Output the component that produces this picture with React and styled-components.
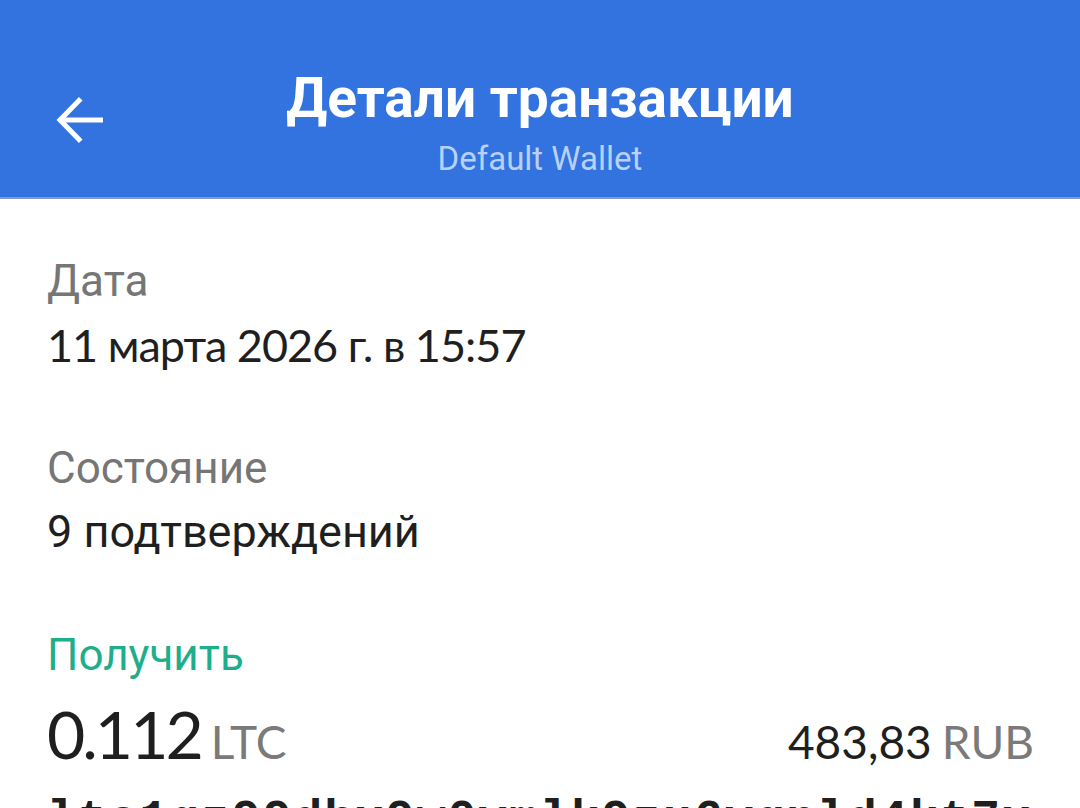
import React from "react";
import styled, { createGlobalStyle } from "styled-components";

const GlobalStyle = createGlobalStyle`
  html, body {
    margin: 0;
    padding: 0;
    background: #ffffff;
    overflow: hidden;
  }
`;

function BackIcon() {
  return (
    <svg width="48" height="48" viewBox="0 0 48 48" fill="none">
      <path
        d="M46 24H6M24 4.5L5 24l19 19.5"
        stroke="#ffffff"
        strokeWidth="5"
        strokeLinecap="square"
      />
    </svg>
  );
}

function App() {
  return (
    <Page>
      <GlobalStyle />
      <Header>
        <BackButton>
          <BackIcon />
        </BackButton>
        <Titles>
          <Title>Детали транзакции</Title>
          <Subtitle>Default Wallet</Subtitle>
        </Titles>
      </Header>

      <Content>
        <Field>
          <Label>Дата</Label>
          <DateValue>11 марта 2026 г. в 15:57</DateValue>
        </Field>

        <Field>
          <Label>Состояние</Label>
          <Value>9 подтверждений</Value>
        </Field>

        <Field>
          <Label $accent>Получить</Label>
          <AmountRow>
            <Amount>
              <Big>0.112</Big>
              <Unit>LTC</Unit>
            </Amount>
            <Amount>
              <Fiat>483,83</Fiat>
              <Unit>RUB</Unit>
            </Amount>
          </AmountRow>
          <Address>ltc1qz99dhx9w0vmlk9zu6ygnld4kt7x</Address>
        </Field>
      </Content>
    </Page>
  );
}

export default App;

const Page = styled.div`
  width: 1080px;
  height: 808px;
  overflow: hidden;
  background: #ffffff;
`;

const Header = styled.header`
  position: relative;
  height: 197px;
  background: #3273e0;
  border-bottom: 2px solid #7f9bc9;
  display: flex;
  justify-content: center;
`;

const BackButton = styled.div`
  position: absolute;
  left: 55px;
  top: 96px;
  width: 48px;
  height: 48px;
  display: flex;
`;

const Titles = styled.div`
  display: flex;
  flex-direction: column;
  align-items: center;
  padding-top: 66px;
`;

const Title = styled.h1`
  margin: 0;
  font-family: Roboto, "Noto Sans", sans-serif;
  font-weight: 700;
  font-size: 55px;
  line-height: 64px;
  color: #ffffff;
`;

const Subtitle = styled.div`
  margin-top: 7px;
  font-family: Roboto, "Noto Sans", sans-serif;
  font-size: 33px;
  line-height: 44px;
  color: #b9d0f7;
`;

const Content = styled.main`
  padding: 56px 46px 0 47px;
  display: flex;
  flex-direction: column;
  gap: 71px;
`;

const Field = styled.section`
  display: flex;
  flex-direction: column;
  gap: 12px;
`;

const Label = styled.div`
  font-family: Roboto, "Noto Sans", sans-serif;
  font-size: 44px;
  line-height: 52px;
  color: ${(p) => (p.$accent ? "#1fae8c" : "#767676")};
`;

const Value = styled.div`
  font-family: Roboto, "Noto Sans", sans-serif;
  font-size: 45px;
  line-height: 52px;
  color: #1f1f1f;
`;

const DateValue = styled(Value)`
  font-family: Lato, "Noto Sans", sans-serif;
  letter-spacing: -1px;
`;

const AmountRow = styled.div`
  display: flex;
  justify-content: space-between;
  align-items: baseline;
  margin-top: 4px;
`;

const Amount = styled.div`
  display: flex;
  align-items: baseline;
  gap: 10px;
`;

const Big = styled.span`
  font-family: Lato, "Noto Sans", sans-serif;
  font-size: 66px;
  line-height: 74px;
  letter-spacing: -3px;
  color: #1f1f1f;
`;

const Fiat = styled.span`
  font-family: Lato, "Noto Sans", sans-serif;
  font-size: 46px;
  color: #1f1f1f;
`;

const Unit = styled.span`
  font-family: Lato, "Noto Sans", sans-serif;
  font-size: 46px;
  color: #7a7a7a;
`;

const Address = styled.div`
  margin-top: 10px;
  font-family: "Liberation Mono", "DejaVu Sans Mono", monospace;
  font-weight: 700;
  font-size: 48px;
  letter-spacing: 2px;
  color: #1f1f1f;
  white-space: nowrap;
`;
